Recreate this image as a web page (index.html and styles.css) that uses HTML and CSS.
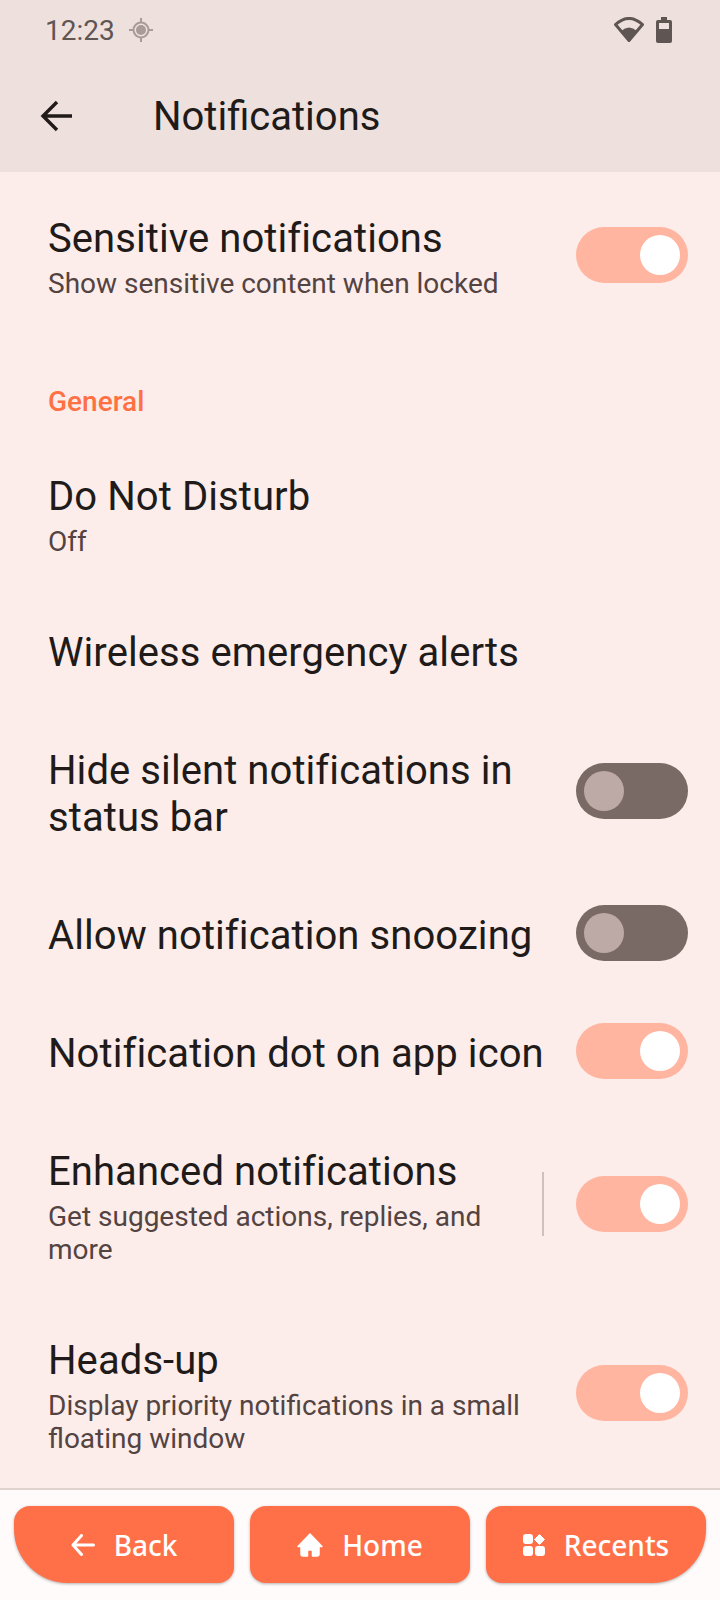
FILE: index.html
```html
<!DOCTYPE html>
<html lang="en">
<head>
  <meta charset="UTF-8" />
  <meta name="viewport" content="width=device-width, initial-scale=1.0" />
  <title>Notifications</title>
  <link rel="stylesheet" href="styles.css">
</head>
<body>
  <div class="screen">
    <header class="appbar">
      <div class="status">
        <div class="status-left">
          <span class="clock">12:23</span>
          <svg class="gps" viewBox="0 0 24 24" width="24" height="24">
            <circle cx="12" cy="12" r="7.500" fill="none" stroke="#a89b98" stroke-width="2"/>
            <circle cx="12" cy="12" r="5" fill="#a89b98"/>
            <path d="M12 0v4M12 20v4M0 12h4M20 12h4" stroke="#a89b98" stroke-width="2"/>
          </svg>
        </div>
        <div class="status-right">
          <svg viewBox="0 0 30 26" width="30" height="26">
            <path d="M15 23.500 L1.500 7.500 Q15 -4.500 28.500 7.500 Z" fill="none" stroke="#5f5553" stroke-width="3" stroke-linejoin="round"/>
            <path d="M15 25 L7 14 Q15 7 23 14 Z" fill="#5f5553"/>
          </svg>
          <svg viewBox="0 0 16 26" width="16" height="26">
            <path d="M5 0h6v3h3a2 2 0 0 1 2 2v19a2 2 0 0 1-2 2H2a2 2 0 0 1-2-2V5a2 2 0 0 1 2-2h3z" fill="#5f5553"/>
            <rect x="3" y="6" width="10" height="6" fill="#eee0dd"/>
          </svg>
        </div>
      </div>
      <div class="toolbar">
        <svg class="back-arrow" viewBox="0 0 32 32" width="32" height="32">
          <path d="M32 16H3M17 2 3 16l14 14" fill="none" stroke="#201a19" stroke-width="3.400"/>
        </svg>
        <h1>Notifications</h1>
      </div>
    </header>

    <main class="settings">
      <div class="row">
        <div class="row-text">
          <div class="row-title">Sensitive notifications</div>
          <div class="row-sub">Show sensitive content when locked</div>
        </div>
        <div class="switch on"><span class="knob"></span></div>
      </div>

      <div class="category">General</div>

      <div class="row">
        <div class="row-text">
          <div class="row-title">Do Not Disturb</div>
          <div class="row-sub">Off</div>
        </div>
      </div>
      <div class="row">
        <div class="row-text">
          <div class="row-title">Wireless emergency alerts</div>
        </div>
      </div>
      <div class="row">
        <div class="row-text">
          <div class="row-title">Hide silent notifications in status bar</div>
        </div>
        <div class="switch"><span class="knob"></span></div>
      </div>
      <div class="row">
        <div class="row-text">
          <div class="row-title">Allow notification snoozing</div>
        </div>
        <div class="switch"><span class="knob"></span></div>
      </div>
      <div class="row">
        <div class="row-text">
          <div class="row-title">Notification dot on app icon</div>
        </div>
        <div class="switch on"><span class="knob"></span></div>
      </div>
      <div class="row">
        <div class="row-text">
          <div class="row-title">Enhanced notifications</div>
          <div class="row-sub">Get suggested actions, replies, and more</div>
        </div>
        <div class="divider"></div>
        <div class="switch on"><span class="knob"></span></div>
      </div>
      <div class="row">
        <div class="row-text">
          <div class="row-title">Heads-up</div>
          <div class="row-sub">Display priority notifications in a small floating window</div>
        </div>
        <div class="switch on"><span class="knob"></span></div>
      </div>
    </main>

    <!-- Bottom navigation -->
    <nav class="nav">
      <button class="nav-btn nav-back">
        <svg viewBox="0 0 24 22" width="24" height="22">
          <path d="M22.500 11H2M10.500 1.500 2 11l8.500 9.500" fill="none" stroke="#fff" stroke-width="3" stroke-linecap="round" stroke-linejoin="round"/>
        </svg>
        Back
      </button>
      <button class="nav-btn">
        <svg viewBox="0 0 26 24" width="26" height="24">
          <path d="M13 1 1 13.500h3V21a2 2 0 0 0 2 2h4.500v-6h5v6H20a2 2 0 0 0 2-2v-7.500h3z" fill="#fff" stroke="#fff" stroke-width="1.500" stroke-linejoin="round"/>
        </svg>
        Home
      </button>
      <button class="nav-btn nav-recents">
        <svg viewBox="0 0 22 22" width="22" height="22">
          <rect x="0" y="0" width="10" height="10" rx="3" fill="#fff"/>
          <path d="M16.500 0.500 21.500 5.500 16.500 10.500 11.500 5.500z" fill="#fff" stroke="#fff" stroke-linejoin="round"/>
          <rect x="0" y="12" width="10" height="10" rx="3" fill="#fff"/>
          <rect x="12" y="12" width="10" height="10" rx="3" fill="#fff"/>
        </svg>
        Recents
      </button>
    </nav>
  </div>
</body>
</html>
```

FILE: styles.css
```css
* {
  box-sizing: border-box;
  margin: 0;
  padding: 0;
}
html, body {
  height: 1600px;
  overflow: hidden;
}
body {
  font-family: 'Roboto', sans-serif;
  background-color: #fcedea;
  color: #201a19;
}
.screen {
  display: flex;
  flex-direction: column;
  height: 1600px;
}

/* Header */
.appbar {
  height: 172px;
  flex: none;
  background-color: #eee0dd;
}
.status {
  display: flex;
  justify-content: space-between;
  align-items: center;
  height: 60px;
  padding: 0 48px 0 45px;
}
.status-left, .status-right {
  display: flex;
  align-items: center;
}
.status-left {
  gap: 14px;
}
.status-right {
  gap: 12px;
}
.clock {
  font-size: 28px;
  color: #5f5553;
}
.toolbar {
  display: flex;
  align-items: center;
  height: 112px;
  padding-left: 40px;
}
.back-arrow {
  flex: none;
}
h1 {
  font-size: 40px;
  font-weight: 400;
  margin-left: 81px;
}

/* Settings list */
.settings {
  flex: 1;
  padding-top: 7px;
  overflow: hidden;
}
.row {
  display: flex;
  align-items: center;
  padding: 0 32px 0 48px;
}
.row-text {
  flex: 1;
  min-width: 0;
  padding: 36px 0 35px;
}
.row-title {
  font-size: 40px;
  line-height: 47px;
  letter-spacing: 0.08px;
}
.row-sub {
  margin-top: 5px;
  font-size: 28px;
  line-height: 33px;
  color: #534341;
}
.category {
  padding: 51px 48px 19px;
  font-size: 28px;
  line-height: 32px;
  font-weight: 500;
  color: #ff7043;
}
.switch {
  display: flex;
  align-items: center;
  flex: none;
  width: 112px;
  height: 56px;
  margin-left: 32px;
  margin-bottom: 5px;
  padding: 0 8px;
  border-radius: 28px;
  background-color: #7a6a66;
}
.knob {
  width: 40px;
  height: 40px;
  border-radius: 50%;
  background-color: #bdaaa6;
}
.switch.on {
  justify-content: flex-end;
  background-color: #ffb5a0;
}
.switch.on .knob {
  background-color: #fff;
}
.divider {
  flex: none;
  width: 2px;
  height: 64px;
  margin-left: 32px;
  margin-bottom: 5px;
  background-color: #cfc0bc;
}

/* Bottom nav */
.nav {
  display: flex;
  flex: none;
  gap: 16px;
  height: 112px;
  padding: 16px 14px 17px;
  background-color: #fffbfa;
  border-top: 2px solid #e0d2ce;
}
.nav-btn {
  display: flex;
  align-items: center;
  justify-content: center;
  gap: 19px;
  flex: 1;
  border: none;
  border-radius: 16px;
  background-color: #ff7049;
  color: #fff;
  font-family: 'Noto Sans', sans-serif;
  font-size: 28px;
  font-weight: 500;
  box-shadow: 0 1px 3px rgba(0, 0, 0, 0.3);
}
.nav-back {
  border-radius: 16px 16px 16px 54px;
}
.nav-recents {
  border-radius: 16px 16px 54px 16px;
}
```
